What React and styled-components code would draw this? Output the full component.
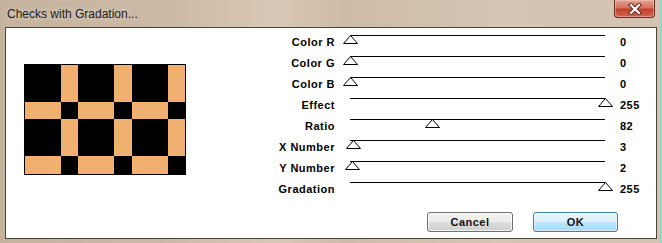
import React from "react";
import styled, { createGlobalStyle } from "styled-components";

const Global = createGlobalStyle`
  html, body { margin: 0; padding: 0; background: #8fc6cc; overflow: hidden; }
  * { box-sizing: border-box; }
`;

const Window = styled.div`
  width: 662px;
  height: 243px;
  display: flex;
  flex-direction: column;
  padding: 0 3px 4px 5px;
  background: linear-gradient(90deg, #c6b39e 0%, #cbb9a5 25%, #d9c8b5 42%, #cdbba7 52%, #d5c5b2 75%, #d3c3b0 100%);
  border-right: 2px solid #9fcfd3;
  font-family: "Liberation Sans", Arial, sans-serif;
`;

const TitleBar = styled.div`
  height: 27px;
  display: flex;
  justify-content: space-between;
  align-items: flex-start;
  padding-left: 2px;
  margin-right: 2px;
`;

const Title = styled.div`
  font-family: "Liberation Sans", Arial, sans-serif;
  font-size: 12px;
  line-height: 14px;
  padding-top: 7px;
  color: #1a1a1a;
  text-shadow: 0 0 6px rgba(255, 255, 255, 0.6);
`;

const CloseButton = styled.div`
  width: 41px;
  height: 18px;
  display: flex;
  align-items: center;
  justify-content: center;
  border: 1px solid #6b2d24;
  border-top: none;
  border-radius: 0 0 4px 4px;
  background: linear-gradient(180deg, #e3a394 0%, #d2705d 45%, #c2412e 55%, #d3654f 100%);
  box-shadow: inset 0 0 0 1px rgba(255, 210, 200, 0.45);
`;

const Client = styled.div`
  flex: 1;
  display: flex;
  flex-direction: column;
  background: #ffffff;
  border: 1px solid #4e4336;
`;

const Body = styled.div`
  display: flex;
  padding-top: 7px;
`;

const PreviewPanel = styled.div`
  width: 249px;
  padding: 29px 0 0 18px;
`;

const Checker = styled.div`
  display: grid;
  width: 162px;
  height: 111px;
  border: 1px solid #000;
  grid-template-columns: ${(p) => p.$cols};
  grid-template-rows: ${(p) => p.$rows};
`;

const Cell = styled.div`
  background: ${(p) => (p.$on ? "#f0b070" : "#000")};
`;

const Sliders = styled.div`
  display: flex;
  flex-direction: column;
`;

const Row = styled.div`
  display: grid;
  grid-template-columns: 80px 269px auto;
  column-gap: 8px;
  height: 21px;
`;

const Label = styled.div`
  text-align: right;
  font-size: 11px;
  line-height: 14px;
  font-weight: bold;
  letter-spacing: 0.5px;
  color: #000;
  white-space: nowrap;
`;

const Value = styled(Label)`
  text-align: left;
`;

const Track = styled.div`
  position: relative;
  height: 21px;
`;

const Line = styled.div`
  margin: 0 7px;
  height: 1px;
  background: #000;
`;

const Thumb = styled.svg`
  position: absolute;
  top: 0;
  display: block;
`;

const Footer = styled.div`
  display: flex;
  justify-content: flex-end;
  gap: 20px;
  padding: 9px 38px 0 0;
`;

const Button = styled.div`
  width: ${(p) => (p.$wide ? 86 : 85)}px;
  height: 20px;
  display: flex;
  align-items: center;
  justify-content: center;
  border-radius: 3px;
  font-size: 11px;
  font-weight: bold;
  letter-spacing: 0.5px;
  color: #111;
  border: 1px solid ${(p) => (p.$default ? "#3c7fb1" : "#707070")};
  background: ${(p) =>
    p.$default
      ? "linear-gradient(180deg, #eaf6fd 0%, #d9f0fc 50%, #bee6fd 51%, #a7d9f5 100%)"
      : "linear-gradient(180deg, #f2f2f2 0%, #ebebeb 50%, #dddddd 51%, #cfcfcf 100%)"};
  box-shadow: inset 0 0 0 1px ${(p) => (p.$default ? "rgba(255,255,255,0.5)" : "rgba(255,255,255,0.7)")};
`;

const sliders = [
  { label: "Color R", value: 0 },
  { label: "Color G", value: 0 },
  { label: "Color B", value: 0 },
  { label: "Effect", value: 255 },
  { label: "Ratio", value: 82 },
  { label: "X Number", value: 3 },
  { label: "Y Number", value: 2 },
  { label: "Gradation", value: 255 },
];

function buildTemplate(total, count, ratio) {
  const cell = total / count;
  const on = cell * (ratio / 255);
  const off = cell - on;
  const parts = [];
  for (let i = 0; i < count; i++) parts.push(`${off}px ${on}px`);
  return parts.join(" ");
}

function Preview({ xn, yn, ratio }) {
  const cells = [];
  for (let r = 0; r < yn * 2; r++) {
    for (let c = 0; c < xn * 2; c++) {
      cells.push(<Cell key={`${r}-${c}`} $on={(r % 2) !== (c % 2)} />);
    }
  }
  return (
    <Checker $cols={buildTemplate(160, xn, ratio)} $rows={buildTemplate(109, yn, ratio)}>
      {cells}
    </Checker>
  );
}

function Slider({ label, value }) {
  return (
    <Row>
      <Label>{label}</Label>
      <Track>
        <Line />
        <Thumb width="15" height="9" viewBox="0 0 15 9" style={{ left: value }}>
          <polygon points="7.5,0.5 14.5,8.5 0.5,8.5" fill="#fff" stroke="#000" strokeWidth="1" />
        </Thumb>
      </Track>
      <Value>{value}</Value>
    </Row>
  );
}

export default function App() {
  return (
    <>
      <Global />
      <Window>
        <TitleBar>
          <Title>Checks with Gradation...</Title>
          <CloseButton>
            <svg width="14" height="12" viewBox="0 0 14 12">
              <path d="M3 2 L11 10 M11 2 L3 10" stroke="#5a2a22" strokeWidth="4.2" strokeLinecap="square" />
              <path d="M3 2 L11 10 M11 2 L3 10" stroke="#ffffff" strokeWidth="2.2" strokeLinecap="square" />
            </svg>
          </CloseButton>
        </TitleBar>
        <Client>
          <Body>
            <PreviewPanel>
              <Preview xn={3} yn={2} ratio={82} />
            </PreviewPanel>
            <Sliders>
              {sliders.map((s) => (
                <Slider key={s.label} label={s.label} value={s.value} />
              ))}
            </Sliders>
          </Body>
          <Footer>
            <Button $wide>Cancel</Button>
            <Button $default>OK</Button>
          </Footer>
        </Client>
      </Window>
    </>
  );
}
